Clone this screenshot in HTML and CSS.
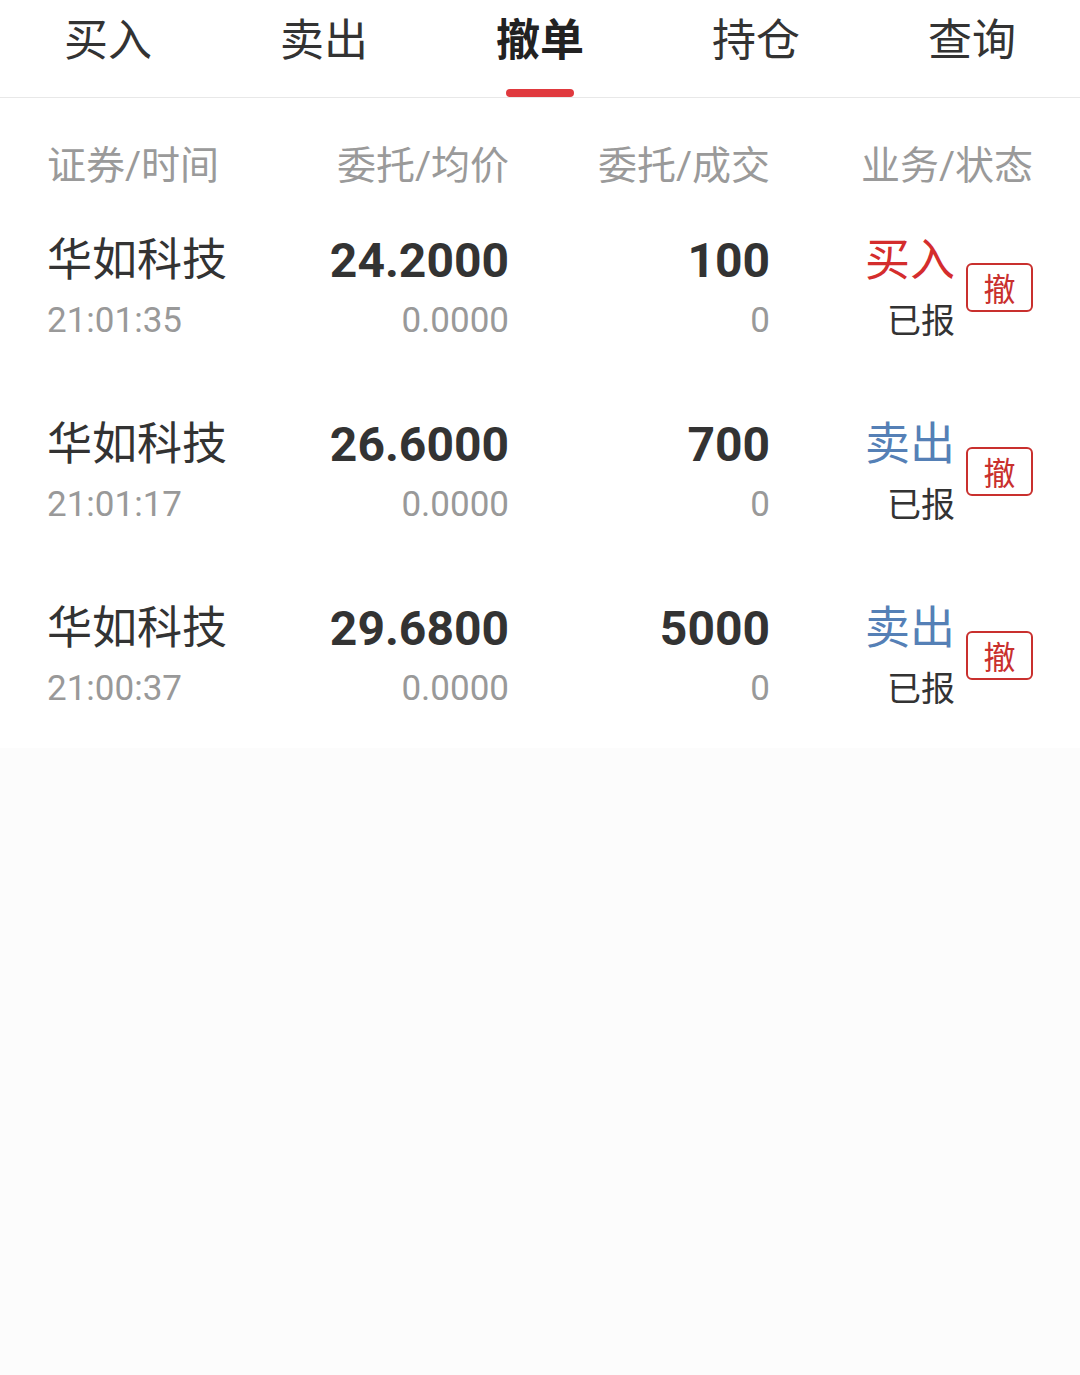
FILE: index.html
```html
<!DOCTYPE html>
<html lang="zh-CN">
<head>
  <meta charset="UTF-8" />
  <meta name="viewport" content="width=device-width, initial-scale=1.0"/>
  <title>撤单</title>
  <link rel="stylesheet" href="styles.css">
</head>
<body>

  <nav class="tabs">
    <a class="tab">买入</a>
    <a class="tab">卖出</a>
    <a class="tab active">撤单</a>
    <a class="tab">持仓</a>
    <a class="tab">查询</a>
  </nav>

  <main class="orders">
    <div class="row head">
      <div class="cell left">证券/时间</div>
      <div class="cell">委托/均价</div>
      <div class="cell">委托/成交</div>
      <div class="cell">业务/状态</div>
    </div>

    <div class="row">
      <div class="cell left">
        <div class="main">华如科技</div>
        <div class="sub">21:01:35</div>
      </div>
      <div class="cell">
        <div class="main num">24.2000</div>
        <div class="sub">0.0000</div>
      </div>
      <div class="cell">
        <div class="main num">100</div>
        <div class="sub">0</div>
      </div>
      <div class="cell action">
        <div class="status">
          <div class="main buy">买入</div>
          <div class="sub dark">已报</div>
        </div>
        <button class="cancel">撤</button>
      </div>
    </div>

    <div class="row">
      <div class="cell left">
        <div class="main">华如科技</div>
        <div class="sub">21:01:17</div>
      </div>
      <div class="cell">
        <div class="main num">26.6000</div>
        <div class="sub">0.0000</div>
      </div>
      <div class="cell">
        <div class="main num">700</div>
        <div class="sub">0</div>
      </div>
      <div class="cell action">
        <div class="status">
          <div class="main sell">卖出</div>
          <div class="sub dark">已报</div>
        </div>
        <button class="cancel">撤</button>
      </div>
    </div>

    <div class="row">
      <div class="cell left">
        <div class="main">华如科技</div>
        <div class="sub">21:00:37</div>
      </div>
      <div class="cell">
        <div class="main num">29.6800</div>
        <div class="sub">0.0000</div>
      </div>
      <div class="cell">
        <div class="main num">5000</div>
        <div class="sub">0</div>
      </div>
      <div class="cell action">
        <div class="status">
          <div class="main sell">卖出</div>
          <div class="sub dark">已报</div>
        </div>
        <button class="cancel">撤</button>
      </div>
    </div>
  </main>

</body>
</html>
```

FILE: styles.css
```css
body {
  font-family: Roboto, "Noto Sans CJK SC", sans-serif;
  background-color: #fcfcfc;
  color: #333;
  margin: 0;
}
.tabs {
  display: grid;
  grid-template-columns: repeat(5, 1fr);
  height: 98px;
  background: #fff;
  border-bottom: 1px solid #e8e8e8;
  box-sizing: border-box;
}
.tab {
  display: flex;
  flex-direction: column;
  align-items: center;
  font-size: 44px;
  line-height: 82px;
  color: #333;
}
.tab.active {
  font-weight: bold;
  color: #222;
}
.tab.active::after {
  content: "";
  width: 68px;
  height: 8px;
  margin-top: 7px;
  border-radius: 4px;
  background: #e0393e;
}
.orders {
  background: #fff;
  padding: 0 47px;
}
.row {
  display: grid;
  grid-template-columns: 200px 262px 261px 263px;
  padding: 34px 0 30px;
}
.row.head {
  padding: 38px 0 0;
  font-size: 39px;
  line-height: 60px;
  color: #9a9a9a;
}
.cell {
  text-align: right;
}
.cell.left {
  text-align: left;
}
.main {
  font-size: 45px;
  line-height: 62px;
  color: #333;
}
.main.num {
  font-size: 48px;
  font-weight: bold;
}
.sub {
  font-size: 35px;
  line-height: 58px;
  color: #999;
}
.sub.dark {
  font-size: 34px;
  color: #333;
}
.action {
  display: flex;
  justify-content: flex-end;
  align-items: center;
  gap: 11px;
}
.buy {
  color: #d42d2d;
}
.sell {
  color: #5580b6;
}
.cancel {
  width: 67px;
  height: 49px;
  margin-bottom: 6px;
  border: 2px solid #c9302e;
  border-radius: 6px;
  background: #fff;
  color: #c9302e;
  font-family: "Noto Sans CJK SC", sans-serif;
  font-size: 32px;
  line-height: 1;
  padding: 0;
}
```
